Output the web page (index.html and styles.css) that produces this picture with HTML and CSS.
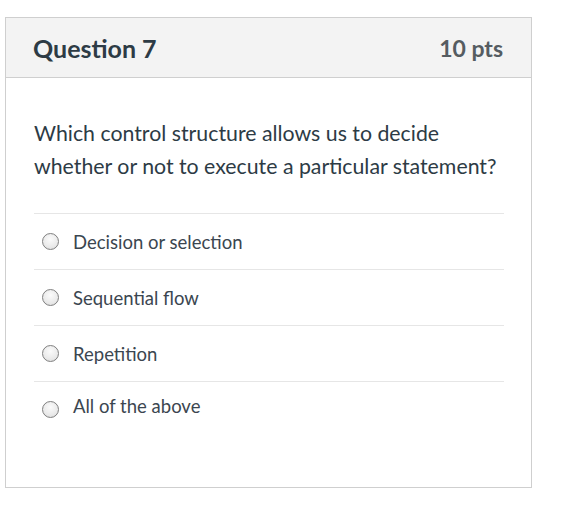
FILE: index.html
```html
<!DOCTYPE html>
<html>
<head>
<meta charset="utf-8">
<link rel="stylesheet" href="styles.css">
</head>
<body>
<div class="card">
  <div class="header">
    <span class="title">Question 7</span>
    <span class="pts">10 pts</span>
  </div>
  <div class="body">
    <p class="question">Which control structure allows us to decide whether or not to execute a particular statement?</p>
    <div class="answers">
      <div class="answer"><span class="radio"></span><span class="label">Decision or selection</span></div>
      <div class="answer"><span class="radio"></span><span class="label">Sequential flow</span></div>
      <div class="answer"><span class="radio"></span><span class="label">Repetition</span></div>
      <div class="answer last"><span class="radio"></span><span class="label">All of the above</span></div>
    </div>
  </div>
</div>
</body>
</html>
```

FILE: styles.css
```css
html, body {
  margin: 0;
  padding: 0;
  background: #fff;
}
body {
  font-family: Lato, "Open Sans", sans-serif;
  padding: 17px 0 0 5px;
}
.card {
  width: 525px;
  height: 469px;
  border: 1px solid #cfcfcf;
  box-sizing: content-box;
  display: flex;
  flex-direction: column;
}
.header {
  height: 59px;
  background: #f3f3f3;
  border-bottom: 1px solid #cfcfcf;
  display: flex;
  align-items: center;
  justify-content: space-between;
  padding: 0 28px 0 27px;
}
.title {
  font-size: 25px;
  font-weight: 700;
  color: #2d3b45;
}
.pts {
  font-size: 23px;
  font-weight: 700;
  color: #555c61;
}
.body {
  padding: 0 27px 0 28px;
}
.question {
  margin: 39px 0 0 0;
  font-size: 21.3px;
  line-height: 33px;
  color: #2d3b45;
}
.answers {
  margin-top: 30px;
}
.answer {
  border-top: 1px solid #e6e6e6;
  height: 55px;
  display: flex;
  align-items: center;
  padding-left: 8px;
}
.answer.last {
  align-items: flex-start;
  padding-top: 13px;
  height: 42px;
}
.radio {
  width: 15px;
  height: 15px;
  border-radius: 50%;
  border: 1.5px solid #7f7f7f;
  background: radial-gradient(circle at 50% 35%, #fbfbfb 0%, #eaeaea 60%, #d9d9d9 100%);
  margin-right: 14px;
  flex: none;
}
.answer.last .radio {
  margin-top: 6px;
}
.label {
  font-size: 18.5px;
  color: #3b4650;
}
```
